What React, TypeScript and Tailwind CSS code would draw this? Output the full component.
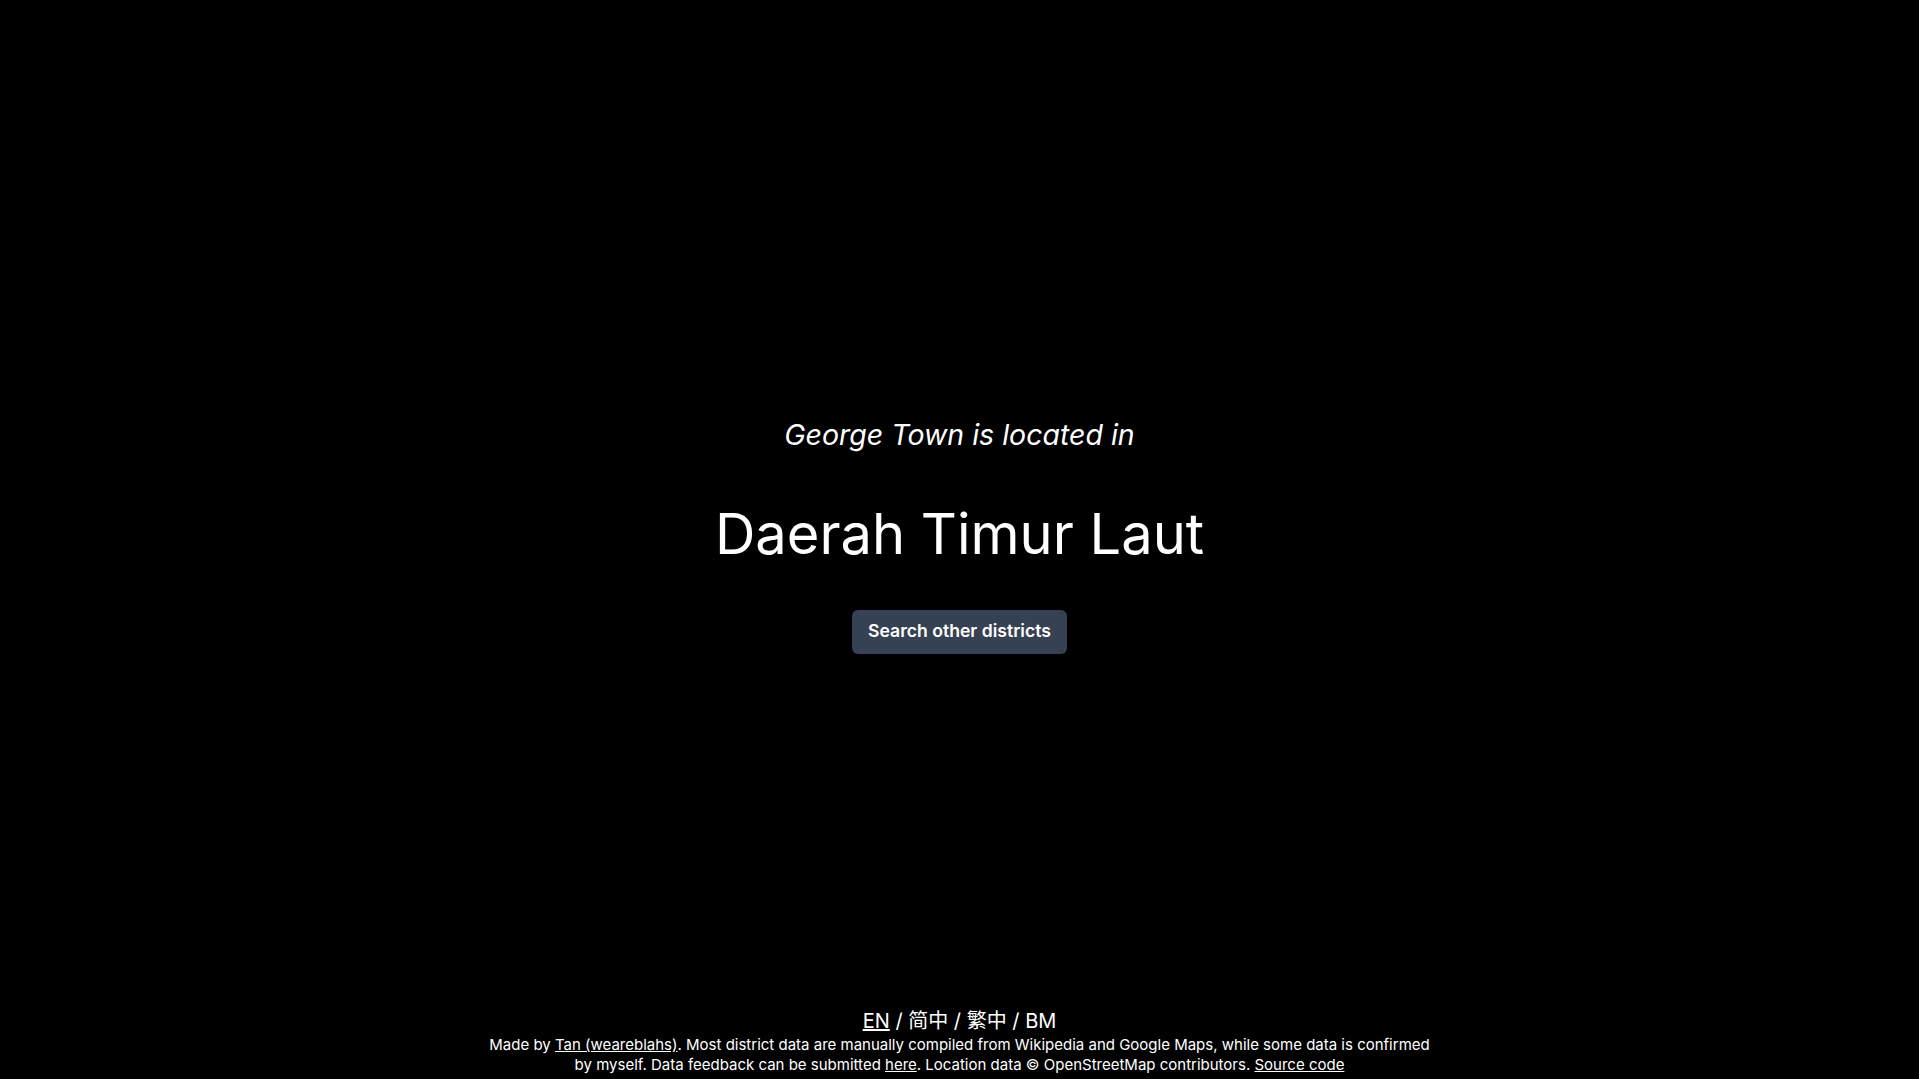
import React from "react";

export default function App() {
  return (
    <div
      className="h-screen bg-black text-white flex flex-col items-center"
      style={{ fontFamily: "Inter, 'Noto Sans CJK SC', sans-serif" }}
    >
      <div className="flex-1" />

      {/* Result */}
      <div className="flex flex-col items-center mb-[9px]">
        <p className="text-[28.5px] leading-9 italic">George Town is located in</p>
        <h1 className="mt-[53px] text-[56px] leading-none">Daerah Timur Laut</h1>
        <button className="mt-[48px] bg-gray-700 rounded-md px-4 h-11 text-[17.6px] font-semibold">
          Search other districts
        </button>
      </div>

      {/* Footer */}
      <div className="flex-1 w-full flex flex-col justify-end items-center">
        <div className="text-xl">
          <a href="#" className="underline">EN</a> / 简中 / 繁中 / BM
        </div>
        <p className="text-[15px] leading-5 text-center w-[950px] pb-1">
          Made by <a href="#" className="underline">Tan (weareblahs)</a>. Most district data are
          manually compiled from Wikipedia and Google Maps, while some data is confirmed by myself.
          Data feedback can be submitted <a href="#" className="underline">here</a>. Location data ©
          OpenStreetMap contributors. <a href="#" className="underline">Source code</a>
        </p>
      </div>
    </div>
  );
}
